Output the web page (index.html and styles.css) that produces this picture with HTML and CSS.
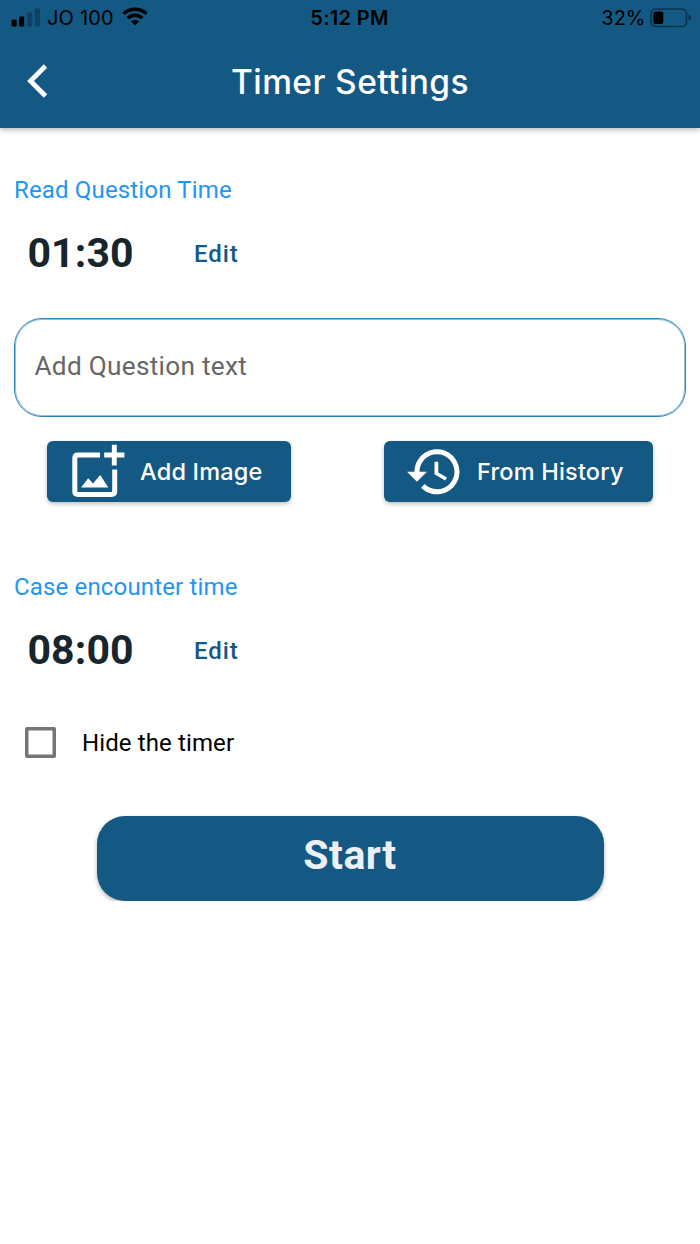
FILE: index.html
```html
<!DOCTYPE html>
<html lang="en">
<head>
<meta charset="utf-8">
<title>Timer Settings</title>
<link rel="stylesheet" href="styles.css">
</head>
<body>
<header class="app-bar">
  <div class="status">
    <div class="status-left">
      <svg class="signal" width="30" height="20" viewBox="0 0 30 20"><rect x="0.5" y="11.500" width="5.200" height="7" rx="1.3"/><rect x="8" y="8.500" width="5.200" height="10" rx="1.3"/><g opacity=".25"><rect x="16" y="4.500" width="5.200" height="14" rx="1.3"/><rect x="23.800" y="0.500" width="5.200" height="18" rx="1.3"/></g></svg>
      <span class="carrier">JO 100</span>
      <svg class="wifi" width="26" height="19" viewBox="0 0 26 19"><g fill="none" stroke="#000" stroke-width="3.600"><path d="M1.500 6.800C8 .8 18 .8 24.500 6.800"/><path d="M5.800 11.200C10 7.200 16 7.200 20.200 11.200"/></g><path d="M13 18.500L9 14.600C11 12.600 15 12.600 17 14.600Z"/></svg>
    </div>
    <span class="clock">5:12 PM</span>
    <div class="status-right">
      <span class="percent">32%</span>
      <svg width="42" height="20" viewBox="0 0 42 20"><rect x="1" y="1" width="35.500" height="17.500" rx="4.500" fill="none" stroke="#000" stroke-opacity=".4" stroke-width="1.700"/><rect x="3.300" y="3.500" width="10" height="12.500" rx="2.200"/><path d="M38.500 6.500Q41 7.500 41 9.700T38.500 13Z" fill-opacity=".45"/></svg>
    </div>
  </div>
  <div class="toolbar">
    <svg class="back" width="24" height="36" viewBox="0 0 24 36"><path d="M20.500 3L5.500 18L20.500 33" fill="none" stroke="#fff" stroke-width="4.800"/></svg>
    <h1 class="title">Timer Settings</h1>
  </div>
</header>
<main class="content">
  <h2 class="section-label read-label">Read Question Time</h2>
  <div class="time-row"><span class="time">01:30</span><a class="edit">Edit</a></div>
  <div class="question"><span class="placeholder">Add Question text</span></div>
  <div class="actions">
    <button class="action add-image">
      <svg width="60" height="60" viewBox="0 0 60 60"><path d="M32 13H10Q6.800 13 6.800 16.200V49.300Q6.800 52.500 10 52.500H43.500Q46.700 52.500 46.700 49.300V27.500" fill="none" stroke="#fff" stroke-width="5"/><path d="M46.300 2.700V23.500M36.200 13H56.400" stroke="#fff" stroke-width="4.900"/><path d="M13 45.500L20.200 36.300L25 41.500L32.200 33L40.300 45.500Z" fill="#fff"/></svg>
      <span class="add-text">Add Image</span>
    </button>
    <button class="action history">
      <svg width="60" height="60" viewBox="0.200 0.100 24 24"><path fill="#fff" d="M13 3c-4.970 0-9 4.030-9 9H1l3.890 3.890.07.14L9 12H6c0-3.870 3.130-7 7-7s7 3.130 7 7-3.130 7-7 7c-1.930 0-3.680-.79-4.940-2.060l-1.420 1.420C8.270 19.990 10.510 21 13 21c4.970 0 9-4.030 9-9s-4.030-9-9-9zm-1 5v5l4.280 2.540.72-1.210-3.500-2.080V8H12z"/></svg>
      <span class="history-text">From History</span>
    </button>
  </div>
  <h2 class="section-label case-label">Case encounter time</h2>
  <div class="time-row"><span class="time">08:00</span><a class="edit">Edit</a></div>
  <div class="hide-row"><span class="checkbox"></span><span class="hide-text">Hide the timer</span></div>
  <button class="start"><span>Start</span></button>
</main>
</body>
</html>
```
FILE: styles.css
```css
* { box-sizing: border-box; }
body { margin: 0; background: #fff; font-family: Roboto, sans-serif; }
h1, h2 { margin: 0; font-weight: 400; }
button { border: 0; padding: 0; font: inherit; }
svg { display: block; flex: none; }
span, a, h1, h2 { white-space: nowrap; }

.app-bar { height: 128px; background: #145884; box-shadow: 0 2px 5px rgba(0,0,0,.28); font-family: Inter, sans-serif; }
.status { height: 37px; display: grid; grid-template-columns: 1fr auto 1fr; font-size: 20px; line-height: 36px; color: #000; }
.status-left, .status-right { display: flex; }
.status-left { padding-left: 11px; }
.signal { margin-top: 7.500px; }
.carrier { margin-left: 6px; letter-spacing: .2px; }
.wifi { margin: 7px 0 0 8px; }
.clock { font-weight: 600; letter-spacing: .3px; margin-right: 1px; }
.status-right { justify-content: flex-end; padding-right: 8.500px; }
.status-right svg { margin: 7.500px 0 0 4px; }
.toolbar { display: grid; grid-template-columns: 50px 1fr 50px; align-items: center; height: 88px; }
.back { margin-left: 25px; }
.title { padding-top: 2px; text-align: center; font-size: 33.500px; line-height: 40px; font-weight: 500; letter-spacing: .4px; color: #fff; }

.content { padding: 0 14px; }
.section-label { font-size: 24px; line-height: 28px; color: #2196f3; letter-spacing: .16px; }
.read-label { margin-top: 48px; }
.case-label { margin-top: 71px; }
.time-row { display: flex; align-items: center; height: 48px; margin-top: 25px; padding-left: 13.500px; }
.time { width: 166.500px; font-size: 41px; font-weight: 700; color: #16262c; letter-spacing: .1px; }
.edit { padding-top: 2px; font-size: 24px; font-weight: 480; color: #145884; letter-spacing: .9px; }
.question { height: 99px; margin-top: 41px; border: 1px solid #2a82bd; box-shadow: inset 0 0 0 1px rgba(42,130,189,.5); border-radius: 28px; padding: 31px 19.500px; }
.placeholder { display: block; font-size: 26.200px; line-height: 32px; letter-spacing: .28px; color: #666; }
.actions { display: flex; justify-content: space-between; margin: 24px 33px 0 33px; }
.action { display: flex; align-items: center; height: 61px; border-radius: 6px; background: #145884; color: #fff; font-family: Inter, sans-serif; font-size: 23.500px; font-weight: 500; box-shadow: 0 2px 4px rgba(0,0,0,.25); }
.add-image { width: 243.500px; padding-left: 20.500px; }
.history { width: 269px; padding-left: 20.500px; }
.add-text, .history-text { margin-left: 12.500px; letter-spacing: .2px; }
.hide-row { display: flex; align-items: center; height: 40px; margin-top: 48px; padding-left: 11px; }
.checkbox { width: 31px; height: 31px; box-shadow: inset 0 0 0 3.500px #757575; border-radius: 2px; }
.hide-text { margin-left: 26px; padding-top: 1px; font-size: 24px; letter-spacing: .12px; color: #000; }
.start { display: block; width: 507px; height: 85px; margin: 54px auto 0; padding-bottom: 7px; border-radius: 28px; background: #145884; color: #ecf0f4; font-size: 41px; font-weight: 700; letter-spacing: .5px; box-shadow: 0 2px 4px rgba(0,0,0,.3); }
```
